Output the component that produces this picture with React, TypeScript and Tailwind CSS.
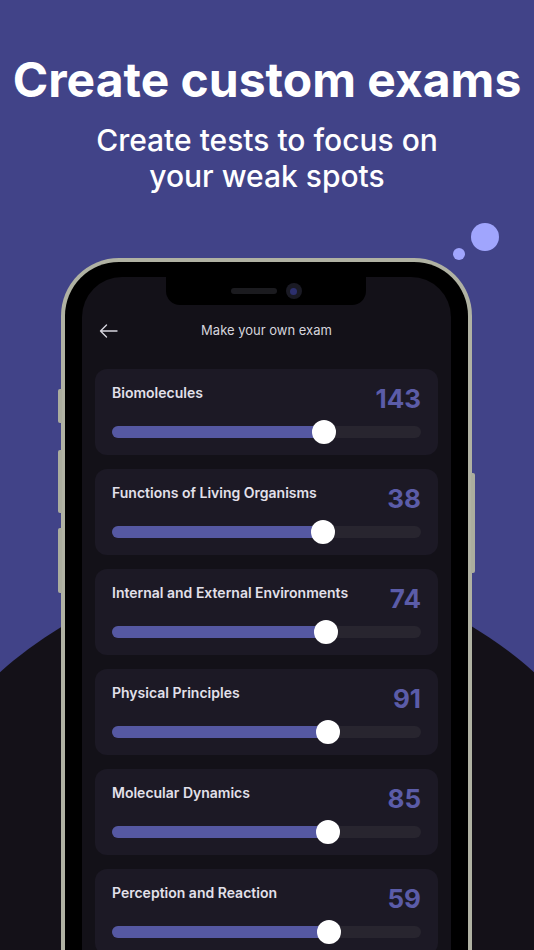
const topics = [
  { name: "Biomolecules", count: 143, pct: 68.5 },
  { name: "Functions of Living Organisms", count: 38, pct: 68.2 },
  { name: "Internal and External Environments", count: 74, pct: 69.2 },
  { name: "Physical Principles", count: 91, pct: 69.8 },
  { name: "Molecular Dynamics", count: 85, pct: 69.8 },
  { name: "Perception and Reaction", count: 59, pct: 70.1 },
];

function TopicCard({ name, count, pct }: { name: string; count: number; pct: number }) {
  return (
    <div className="h-[86px] shrink-0 rounded-[12px] bg-[#1c1925] pl-[17px] pr-[17px] pt-[14px]">
      <div className="flex h-[30px] items-start justify-between">
        <p className="text-[14px] leading-[20px] font-semibold text-[#e2e0ea]">{name}</p>
        <p className="mt-[2px] text-[26px] leading-[28px] font-bold text-[#5b5ca8]">{count}</p>
      </div>
      <div className="relative mt-[13px] h-[12px] rounded-full bg-[#28252f]">
        <div className="h-full rounded-full bg-[#5558a2]" style={{ width: `${pct}%` }} />
        <div
          className="absolute top-1/2 h-[24px] w-[24px] -translate-x-1/2 -translate-y-1/2 rounded-full bg-white"
          style={{ left: `${pct}%` }}
        />
      </div>
    </div>
  );
}

export default function App() {
  return (
    <div className="relative h-[950px] w-[534px] overflow-hidden bg-[#414388] font-['Inter',sans-serif]">
      {/* dark hill behind the phone */}
      <div className="absolute left-[-133px] top-[570px] h-[800px] w-[800px] rounded-full bg-[#141118]" />

      <div className="relative flex flex-col items-center pt-[52px] text-white">
        <h1 className="text-[48px] leading-[56px] font-bold whitespace-nowrap">Create custom exams</h1>
        <p className="mt-[14px] text-center text-[30px] leading-[36px] font-medium">
          Create tests to focus on
          <br />
          your weak spots
        </p>
      </div>

      {/* bubbles */}
      <div className="absolute left-[471px] top-[223px] h-[28px] w-[28px] rounded-full bg-[#a0a5fd]" />
      <div className="absolute left-[453px] top-[248px] h-[12px] w-[12px] rounded-full bg-[#a0a5fd]" />

      {/* phone */}
      <div className="relative ml-[61px] mt-[64px] w-[411px]">
        {/* side buttons */}
        <div className="absolute left-[-3px] top-[131px] h-[34px] w-[4px] rounded-l-[2px] bg-[#abad9e]" />
        <div className="absolute left-[-3px] top-[192px] h-[63px] w-[4px] rounded-l-[2px] bg-[#abad9e]" />
        <div className="absolute left-[-3px] top-[270px] h-[65px] w-[4px] rounded-l-[2px] bg-[#abad9e]" />
        <div className="absolute right-[-3px] top-[215px] h-[100px] w-[4px] rounded-r-[2px] bg-[#abad9e]" />

        <div className="h-[700px] rounded-t-[58px] bg-[#b0b2a3] px-[4px] pt-[4px]">
          <div className="h-full rounded-t-[54px] bg-black px-[17px] pt-[15px]">
            <div className="relative flex h-full flex-col overflow-hidden rounded-t-[40px] bg-[#131118]">
              {/* notch */}
              <div className="absolute left-[84px] top-0 flex h-[28px] w-[200px] items-center justify-center gap-[9px] rounded-b-[14px] bg-black">
                <div className="h-[6px] w-[46px] rounded-full bg-[#1b1b1f]" />
                <div className="flex h-[16px] w-[16px] items-center justify-center rounded-full bg-[#1a1a24]">
                  <div className="h-[7px] w-[7px] rounded-full bg-[#2c2f6e]" />
                </div>
              </div>

              <div className="flex h-[54px] shrink-0 items-end">
                <div className="relative flex h-[0px] w-full items-center justify-center">
                  <svg
                    className="absolute left-[17px]"
                    width="19"
                    height="14"
                    viewBox="0 0 19 14"
                    fill="none"
                    stroke="#d6d5dd"
                    strokeWidth="1.4"
                    strokeLinecap="round"
                    strokeLinejoin="round"
                  >
                    <path d="M18 7H1.5M7.5 1L1.5 7l6 6" />
                  </svg>
                  <p className="text-[13px] text-[#d6d5dd]">Make your own exam</p>
                </div>
              </div>

              <div className="mt-[38px] flex flex-col gap-[14px] pl-[13px] pr-[13px]">
                {topics.map((t) => (
                  <TopicCard key={t.name} {...t} />
                ))}
              </div>
            </div>
          </div>
        </div>
      </div>
    </div>
  );
}
